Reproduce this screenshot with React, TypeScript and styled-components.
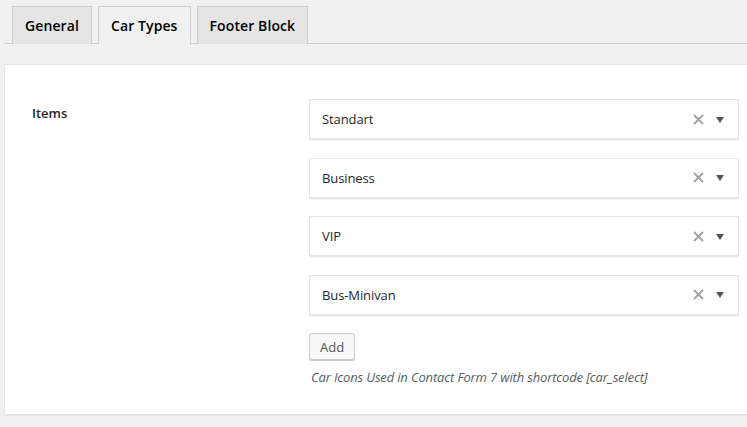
import React from "react";
import styled, { createGlobalStyle } from "styled-components";

const Global = createGlobalStyle`
  html, body { margin: 0; padding: 0; background: #f1f1f1; }
  body { font-family: "Open Sans", "Noto Sans", sans-serif; color: #23282d; }
  * { box-sizing: border-box; }
`;

const Page = styled.div`
  width: 747px;
  height: 427px;
  overflow: hidden;
  padding-top: 6px;
`;

const TabBar = styled.div`
  display: flex;
  gap: 6px;
  margin-left: 4px;
  padding-left: 8px;
  border-bottom: 1px solid #ccc;
  height: 38px;
`;

const Tab = styled.div<{ $active?: boolean }>`
  padding: 0 12px;
  display: flex;
  align-items: center;
  font-size: 14px;
  font-weight: 600;
  letter-spacing: 0.1px;
  color: #000;
  background: ${(p) => (p.$active ? "#f1f1f1" : "#e5e5e5")};
  border: 1px solid #ccc;
  border-bottom: ${(p) => (p.$active ? "1px solid #f1f1f1" : "none")};
  height: ${(p) => (p.$active ? "39px" : "38px")};
`;

const Panel = styled.div`
  margin: 20px 0 0 4px;
  background: #fff;
  border: 1px solid #e5e5e5;
  border-right: none;
  box-shadow: 0 1px 1px rgba(0, 0, 0, 0.04);
  height: 351px;
  display: grid;
  grid-template-columns: 304px 1fr;
  padding: 34px 8px 0 0;
`;

const Label = styled.div`
  padding: 5px 0 0 27px;
  font-size: 13px;
  font-weight: 600;
  color: #23282d;
`;

const Field = styled.div`
  display: flex;
  flex-direction: column;
  align-items: flex-start;
`;

const Select = styled.div`
  width: 430px;
  height: 41px;
  margin-bottom: 17.5px;
  background: #fff;
  border: 1px solid #e5e5e5;
  border-bottom: 2px solid #e8e8e8;
  box-shadow: 0 1px 1px rgba(0, 0, 0, 0.04);
  display: flex;
  align-items: center;
  padding: 0 14px 0 12px;
`;

const SelectText = styled.span`
  flex: 1;
  font-size: 13px;
  color: #23282d;
  letter-spacing: -0.1px;
`;

const Clear = styled.span`
  display: flex;
  margin-right: 12px;
`;

const Arrow = styled.span`
  width: 0;
  height: 0;
  border-left: 4px solid transparent;
  border-right: 4px solid transparent;
  border-top: 6px solid #555;
  margin-top: 1px;
`;

const AddButton = styled.button`
  font-family: inherit;
  font-size: 13px;
  color: #555;
  background: #f7f7f7;
  border: 1px solid #ccc;
  border-radius: 3px;
  box-shadow: 0 1px 0 #ccc;
  height: 27px;
  padding: 0 10px;
  cursor: pointer;
`;

const Description = styled.p`
  margin: 8px 0 0 2px;
  font-size: 13px;
  font-style: italic;
  color: #555d66;
  letter-spacing: -0.15px;
`;

const items = ["Standart", "Business", "VIP", "Bus-Minivan"];

export default function App() {
  return (
    <Page>
      <Global />
      <TabBar>
        <Tab>General</Tab>
        <Tab $active>Car Types</Tab>
        <Tab>Footer Block</Tab>
      </TabBar>
      <Panel>
        <Label>Items</Label>
        <Field>
          {items.map((it) => (
            <Select key={it}>
              <SelectText>{it}</SelectText>
              <Clear>
                <svg width="11" height="11" viewBox="0 0 11 11">
                  <path d="M1 1 L10 10 M10 1 L1 10" stroke="#a0a0a0" strokeWidth="1.8" />
                </svg>
              </Clear>
              <Arrow />
            </Select>
          ))}
          <AddButton>Add</AddButton>
          <Description>Car Icons Used in Contact Form 7 with shortcode [car_select]</Description>
        </Field>
      </Panel>
    </Page>
  );
}
